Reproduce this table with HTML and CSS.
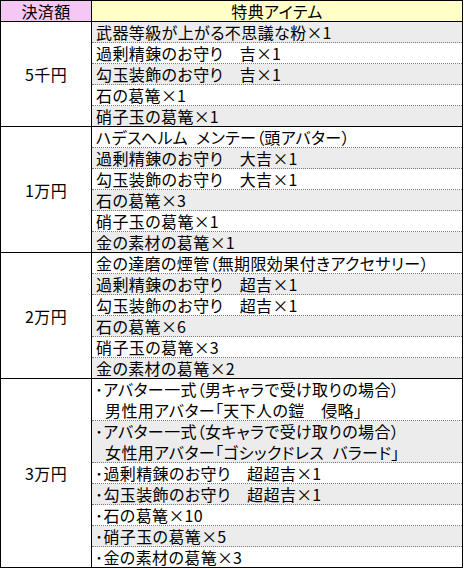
FILE: index.html
```html
<!DOCTYPE html>
<html lang="ja">
<head>
<meta charset="utf-8">
<link rel="stylesheet" href="styles.css">
</head>
<body>
<table class="tbl">
  <thead>
    <tr><th class="h-amt">決済額</th><th class="h-item">特典アイテム</th></tr>
  </thead>
  <tbody class="g1">
    <tr><td class="amt" rowspan="5">5千円</td><td class="it g">武器等級が上がる不思議な粉<span class="x">×</span>1</td></tr>
    <tr><td class="it">過剰精錬のお守り　吉<span class="x">×</span>1</td></tr>
    <tr><td class="it g">勾玉装飾のお守り　吉<span class="x">×</span>1</td></tr>
    <tr><td class="it">石の葛篭<span class="x">×</span>1</td></tr>
    <tr><td class="it g">硝子玉の葛篭<span class="x">×</span>1</td></tr>
  </tbody>
  <tbody>
    <tr><td class="amt" rowspan="6">1万円</td><td class="it">ハデスヘルム&ensp;メンテー<span class="p">（</span>頭アバター<span class="p">）</span></td></tr>
    <tr><td class="it g">過剰精錬のお守り　大吉<span class="x">×</span>1</td></tr>
    <tr><td class="it">勾玉装飾のお守り　大吉<span class="x">×</span>1</td></tr>
    <tr><td class="it g">石の葛篭<span class="x">×</span>3</td></tr>
    <tr><td class="it">硝子玉の葛篭<span class="x">×</span>1</td></tr>
    <tr><td class="it g">金の素材の葛篭<span class="x">×</span>1</td></tr>
  </tbody>
  <tbody>
    <tr><td class="amt" rowspan="6">2万円</td><td class="it">金の達磨の煙管<span class="p">（</span>無期限効果付きアクセサリー<span class="p">）</span></td></tr>
    <tr><td class="it g">過剰精錬のお守り　超吉<span class="x">×</span>1</td></tr>
    <tr><td class="it">勾玉装飾のお守り　超吉<span class="x">×</span>1</td></tr>
    <tr><td class="it g">石の葛篭<span class="x">×</span>6</td></tr>
    <tr><td class="it">硝子玉の葛篭<span class="x">×</span>3</td></tr>
    <tr><td class="it g">金の素材の葛篭<span class="x">×</span>2</td></tr>
  </tbody>
  <tbody>
    <tr><td class="amt" rowspan="7">3万円</td><td class="it bl two"><span class="dot">･</span>アバター一式<span class="p">（</span>男キャラで受け取りの場合<span class="p">）</span><br>男性用アバター「天下人の鎧　侵略」</td></tr>
    <tr><td class="it bl two g"><span class="dot">･</span>アバター一式<span class="p">（</span>女キャラで受け取りの場合<span class="p">）</span><br>女性用アバター「ゴシックドレス&ensp;バラード」</td></tr>
    <tr><td class="it bl"><span class="dot">･</span>過剰精錬のお守り　超超吉<span class="x">×</span>1</td></tr>
    <tr><td class="it bl g"><span class="dot">･</span>勾玉装飾のお守り　超超吉<span class="x">×</span>1</td></tr>
    <tr><td class="it bl"><span class="dot">･</span>石の葛篭<span class="x">×</span>10</td></tr>
    <tr><td class="it bl g"><span class="dot">･</span>硝子玉の葛篭<span class="x">×</span>5</td></tr>
    <tr><td class="it bl"><span class="dot">･</span>金の素材の葛篭<span class="x">×</span>3</td></tr>
  </tbody>
</table>
</body>
</html>
```

FILE: styles.css
```css
html, body {
  margin: 0;
  padding: 0;
  background: #ffffff;
}

.tbl {
  border-collapse: collapse;
  width: 463px;
  font-family: "Noto Sans CJK JP", "Noto Sans", sans-serif;
  font-size: 16px;
  font-feature-settings: "palt";
  letter-spacing: 0.4px;
  color: #000000;
  border: 1px solid #000000;
}

.tbl tr {
  height: 21px;
}

.tbl thead tr {
  height: 20px;
}

.tbl .g1 tr {
  height: 20.6px;
}

.tbl th,
.tbl td {
  padding: 0;
  line-height: 20px;
  font-weight: normal;
  white-space: nowrap;
}

.tbl th {
  border: 1px solid #000000;
  text-align: center;
}

.tbl .h-amt {
  width: 90px;
  background: #f4c7f4;
}

.tbl .h-item {
  background: #ffffc8;
}

.tbl tbody {
  border-top: 1px solid #000000;
}

.tbl td.amt {
  text-align: center;
  vertical-align: middle;
  border-right: 1px solid #000000;
  background: #ffffff;
}

.tbl td.it {
  padding-left: 4px;
  border-top: 1px dotted #7a7a7a;
  background: #ffffff;
}

.tbl td.it.g {
  background: #ececec;
}

.x {
  font-feature-settings: "fwid";
  letter-spacing: 0;
}

.p {
  letter-spacing: 0;
}

.dot {
  font-feature-settings: normal;
}

.tbl td.bl {
  padding-left: 13px;
  text-indent: -10px;
}

.tbl td.two {
  line-height: 20.5px;
}
```
